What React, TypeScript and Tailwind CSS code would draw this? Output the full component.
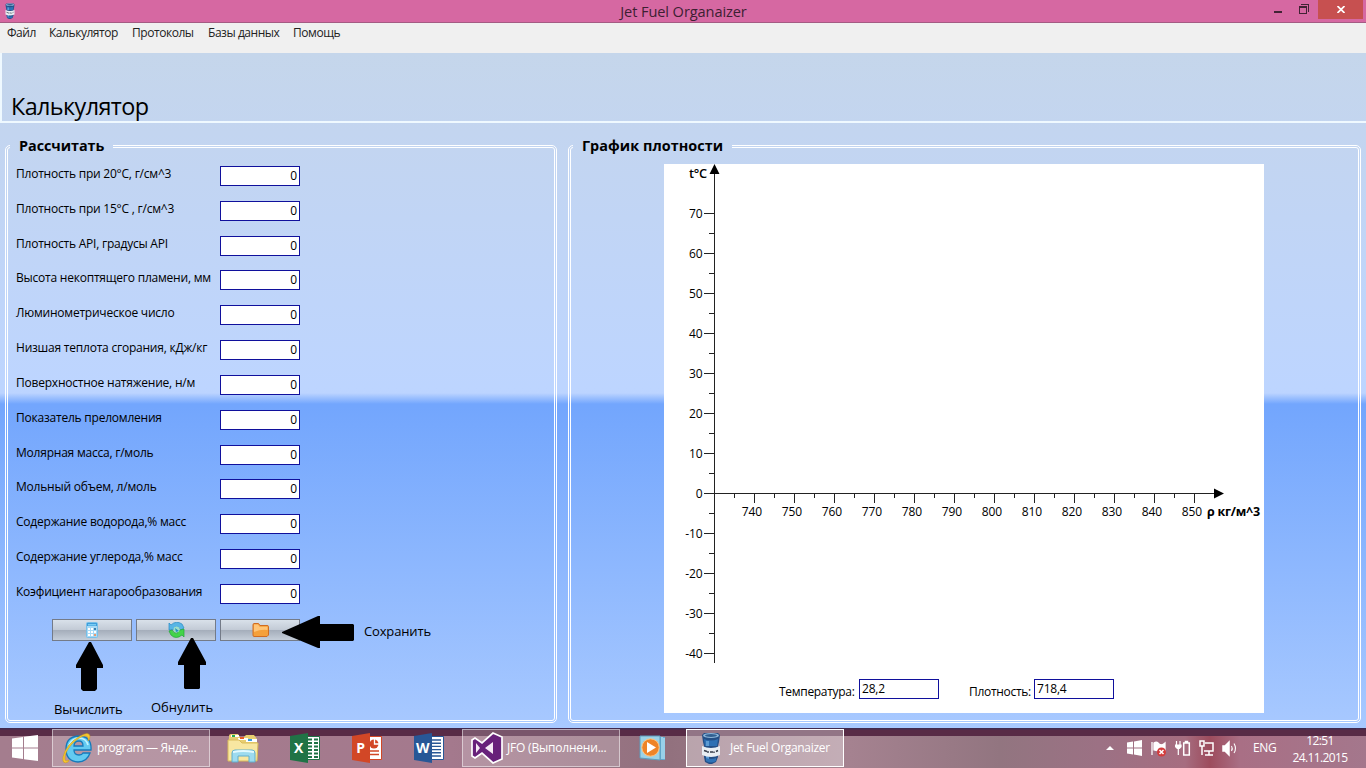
import React from "react";

const menu = [
  { t: "Файл", c: "w-[42px]" },
  { t: "Калькулятор", c: "w-[83px]" },
  { t: "Протоколы", c: "w-[76px]" },
  { t: "Базы данных", c: "w-[85px]" },
  { t: "Помощь", c: "w-[60px]" },
];

const fields = [
  "Плотность при 20°C, г/см^3",
  "Плотность при 15°C , г/см^3",
  "Плотность API, градусы API",
  "Высота некоптящего пламени, мм",
  "Люминометрическое число",
  "Низшая теплота сгорания, кДж/кг",
  "Поверхностное натяжение, н/м",
  "Показатель преломления",
  "Молярная масса, г/моль",
  "Мольный объем, л/моль",
  "Содержание водорода,% масс",
  "Содержание углерода,% масс",
  "Коэфициент нагарообразования",
];

function BarrelIcon({ className }: { className: string }) {
  return (
    <svg viewBox="0 0 20 32" className={className} preserveAspectRatio="none">
      <path d="M1 3L3 1H17L19 3L18 10L17 14V25L15 30L11 32H8L4 30L3 25V14L2 10Z" fill="#244f86" />
      <ellipse cx="10" cy="3.5" rx="8" ry="2.5" fill="#8db5d7" />
      <ellipse cx="10" cy="3.5" rx="6" ry="1.4" fill="#315f91" />
      <path d="M3 7Q10 10 17 7L16 14H4Z" fill="#2d70b4" />
      <path d="M5 9H8V14H5ZM5 24H8V29H5Z" fill="#5c9bd3" />
      <path d="M1 14Q10 18 19 14V23Q10 27 1 23Z" fill="#e9eef3" />
      <path d="M3 18.5L6 19.5M7 19V21M9 20H12M13 19.5V21M15 19.5L17 18.5" stroke="#343b48" strokeWidth="1.4" />
      <path d="M5 26Q10 28 15 26V29Q10 32 5 29Z" fill="#2e73b7" />
    </svg>
  );
}

function WindowsLogo({ className }: { className: string }) {
  return (
    <svg viewBox="0 0 26 26" className={className} fill="#fff">
      <path d="M0 3.5L11 2V12.4H0ZM12 1.8L26 0V12.4H12ZM0 13.4H11V24L0 22.5ZM12 13.4H26V26L12 24.2Z" />
    </svg>
  );
}

function CalculatorIcon() {
  return (
    <svg viewBox="0 0 12 16" className="h-4 w-3">
      <rect x=".5" y=".5" width="11" height="15" rx="1" fill="#a8d9f5" stroke="#77bfe8" />
      <path d="M1 1H11V4H1Z" fill="#3f9ddb" />
      <path d="M2 2H10V3.5H2Z" fill="#79cdf4" />
      <path d="M2 6H4V8H2ZM5 6H7V8H5ZM2 9H4V11H2ZM5 9H7V11H5ZM8 9H10V11H8ZM2 12H4V14H2ZM5 12H7V14H5Z" fill="#fff" />
      <path d="M8 6H10V8H8Z" fill="#397fae" />
      <path d="M8 12H10V14H8Z" fill="#e79a70" />
    </svg>
  );
}

function RefreshIcon() {
  return (
    <svg viewBox="0 0 17 16" className="h-4 w-[17px]">
      <path d="M1 1L3 3Q8-2 14 2L16 6L13 8Q11 4 7 5L8 7L1 8Z" fill="#58b5e5" stroke="#278bc5" strokeWidth=".7" />
      <path d="M16 15L14 13Q8 18 3 13L1 9L4 8Q6 12 10 11L8 9L16 7Z" fill="#43d449" stroke="#20a637" strokeWidth=".7" />
      <circle cx="8.5" cy="7.5" r="3" fill="#9ddfca" />
      <path d="M7 6L11 9L8 10Z" fill="#238fbe" />
    </svg>
  );
}

function FolderIcon() {
  return (
    <svg viewBox="0 0 17 14" className="h-[14px] w-[17px]">
      <path d="M1 2Q1 .5 2 .5H6.5L8 2.5H15Q16.5 2.5 16.5 3.5V12L15 13.5H2Q1 13.5 1 12Z" fill="#f5a03a" stroke="#d06c22" />
      <path d="M2 1.5H6L7.5 3.7H15.5V7Q9 6 2 9Z" fill="#ffc578" />
    </svg>
  );
}

function DensityChart() {
  const xs = Array.from({ length: 12 }, (_, i) => i);
  const ys = Array.from({ length: 12 }, (_, i) => 70 - i * 10);
  return (
    <svg width="600" height="505" viewBox="664 164 600 505" className="block font-['Open_Sans',sans-serif] text-[12px]">
      <g stroke="#222" strokeWidth="1" shapeRendering="crispEdges">
        <path d="M714.5 172V663M704 493.5H1216" />
        {ys.map((v) => <path key={v} d={`M704 ${493.5 - v * 4}H714`} />)}
        {ys.slice(0, 11).map((v) => <path key={v} d={`M709 ${513.5 - v * 4}H714`} />)}
        {xs.map((i) => <path key={i} d={`M${734.5 + i * 40} 494V498M${754.5 + i * 40} 494V503`} />)}
      </g>
      <path d="M714.5 164L719.5 174H709.5ZM1224 493.5L1214 498.5V488.5Z" fill="#000" />
      {ys.map((v) => <text key={v} x="702.5" y={497.8 - v * 4} textAnchor="end" letterSpacing="-.1">{v}</text>)}
      {xs.map((i) => <text key={i} x={752 + i * 40} y="516" textAnchor="middle" letterSpacing="-.1">{740 + i * 10}</text>)}
      <text x="689" y="178" fontWeight="600" textLength="18" lengthAdjust="spacingAndGlyphs">t°C</text>
      <text x="1207" y="516" fontWeight="700" textLength="53" lengthAdjust="spacingAndGlyphs">ρ кг/м^3</text>
    </svg>
  );
}

function OfficeIcon({ letter, color, kind }: { letter: string; color: string; kind: string }) {
  return (
    <svg viewBox="0 0 30 30" className="h-[30px] w-[30px]">
      <path d="M16 3.5H29.5V26.5H16Z" fill="#fff" stroke={color} strokeWidth="1" />
      {kind === "x" && <path d="M18 6.5H22M24 6.5H28M18 10H22M24 10H28M18 13.5H22M24 13.5H28M18 17H22M24 17H28M18 20.5H22M24 20.5H28M18 24H22M24 24H28" stroke={color} strokeWidth="2" />}
      {kind === "p" && <><circle cx="22" cy="11" r="4.5" fill={color} /><path d="M22.5 6V11H27" stroke="#fff" fill="none" strokeWidth="1.3" /><path d="M18 18H27M18 21.5H27" stroke={color} strokeWidth="1.5" /></>}
      {kind === "w" && <path d="M18 7H27M18 10.2H27M18 13.4H27M18 16.6H27M18 19.8H27M18 23H27" stroke={color} strokeWidth="1.4" />}
      <path d="M0 3L18 0V30L0 27Z" fill={color} />
      <text x="8.5" y="20" fontSize="14" fontWeight="700" textAnchor="middle" fill="#fff">{letter}</text>
    </svg>
  );
}

function IeIcon() {
  return (
    <svg viewBox="0 0 30 32" className="h-8 w-[30px] shrink-0">
      <path d="M29 18H12Q12 23 17 23Q20 23 21 21H28Q25 30 16 30Q4 29 4 17Q4 5 16 4Q30 4 29 18ZM12 14H21Q21 9 17 9Q12 9 12 14Z" fill="#63caf1" stroke="#167aba" strokeWidth="1.3" />
      <path d="M7 13Q10 6 17 6Q24 6 26 13" fill="none" stroke="#c0f2ff" strokeWidth="1.7" />
      <path d="M6 30Q0 33 1 25Q4 12 18 4Q27-1 28 4Q28 7 26 9Q27 4 23 4Q18 4 10 12Q2 21 3 27Q3 30 7 28Z" fill="#f8c72e" stroke="#c89b16" strokeWidth=".5" />
    </svg>
  );
}

function ExplorerIcon() {
  return (
    <svg viewBox="0 0 32 30" className="h-[30px] w-8">
      <path d="M2 3Q2 1 4 1H11L13 4H17L19 2H27L30 6V27H1Z" fill="#e8ce71" />
      <path d="M4 2H12V4H4ZM11 5H21V7H11ZM19 6H30V9H19Z" fill="#fff" />
      <path d="M5 2H8V4H5Z" fill="#28ae4e" /><path d="M13 4H17V6H13Z" fill="#e85b28" /><path d="M21 6H25V8H21Z" fill="#3a9ce2" />
      <path d="M1 7H12L15 10H31L30 28H1Z" fill="#f8e7a1" stroke="#d9bc5a" />
      <path d="M5 29V20Q5 17 8 17H25Q28 17 28 20V29H22V23H11V29Z" fill="#9ddbef" stroke="#60aecc" />
      <path d="M6 19Q16 17 27 19" stroke="#e3faff" fill="none" strokeWidth="2" />
    </svg>
  );
}

function MediaIcon() {
  return (
    <svg viewBox="0 0 28 26" className="h-[26px] w-7">
      <path d="M5 1L26 2V25L5 24Z" fill="#61add3" />
      <path d="M23 2V24M25 3V24" stroke="#d1f4ff" />
      <path d="M1 1H21V25L1 23Z" fill="#9bd2e7" stroke="#5f9dbd" />
      <circle cx="11.5" cy="12.5" r="8.7" fill="#ee8428" stroke="#ffc684" />
      <path d="M8 7L17 12.5L8 18Z" fill="#fff" />
    </svg>
  );
}

function StudioIcon() {
  return (
    <svg viewBox="0 0 32 32" className="h-8 w-8 shrink-0">
      <path d="M22 1L31 5V27L22 31L11 21L4 26L1 24V8L4 6L11 11Z" fill="#68217a" stroke="#fff" strokeWidth="1.7" />
      <path d="M5 11L9 16L5 21ZM22 10V22L14 16Z" fill="#f5eaf5" />
    </svg>
  );
}

function TrayIcons() {
  return (
    <svg width="132" height="20" viewBox="0 0 132 20" fill="none" stroke="#fff" strokeWidth="1.5">
      <path d="M0 12L4 8L8 12Z" fill="#fff" stroke="none" />
      <path d="M21 4.5L27 3.6V9.5H21ZM28 3.4L36 2V9.5H28ZM21 10.5H27V16.4L21 15.5ZM28 10.5H36V18L28 16.6Z" fill="#fff" stroke="none" />
      <path d="M46 4V17M48 5Q51 3 53 6Q56 8 59 5V13Q55 14 48 12Z" fill="#fff" strokeWidth="1.3" />
      <circle cx="55.5" cy="14" r="4.5" fill="#d43b3b" stroke="none" /><path d="M53.5 12L57.5 16M57.5 12L53.5 16" />
      <path d="M70.5 3V7M74 3V7M72.3 10V17" strokeWidth="1.2" /><path d="M69 6.5H75.6V9L73.6 11H71L69 9Z" fill="#fff" stroke="none" />
      <path d="M77.7 5H83.3V17H77.7ZM79.5 5V3.4H81.5V5" />
      <rect x="94" y="3" width="4" height="5" /><path d="M96 8V17M99 5H107V13H98M103 13V17M99 17H107" />
      <path d="M117 8H119L123 4V17L119 13H117Z" fill="#fff" /><path d="M125.5 8Q127 10.5 125.5 13M128 5.5Q131 10.5 128 15" strokeWidth="1.1" />
    </svg>
  );
}

function CommandButton({ children }: { children: React.ReactNode }) {
  return <button className="flex h-[22px] w-20 items-center justify-center border border-[#747b88] bg-[linear-gradient(to_bottom,#d9e1ea_0%,#c3cbd6_48%,#a5aebb_52%,#c5ced9_100%)]">{children}</button>;
}

export default function App() {
  return (
    <div className="flex h-[768px] w-[1366px] flex-col overflow-hidden bg-[#f0f0f0] font-['Open_Sans','Noto_Sans',sans-serif] text-[12px] leading-4 tracking-[-0.22px] text-black">
      <header className="flex h-[23px] shrink-0 border-b border-[#a45b83] bg-[#d668a2]">
        <div className="flex w-[52px] pt-[3px] pl-[5px]"><BarrelIcon className="h-4 w-[10px]" /></div>
        <h1 className="flex-1 pl-[46px] text-center text-[14.6px] leading-[23px] tracking-[-0.1px] text-[#3d2032]">Jet Fuel Organaizer</h1>
        <div className="flex w-[97px] shrink-0">
          <svg width="49" height="20" viewBox="0 0 49 20" fill="none" stroke="#422335" shapeRendering="crispEdges"><path d="M5 12H13" strokeWidth="2" /><path d="M31 6.5H37V13.5H30V6.5ZM32 4.5H39.5V12M30 7.5H37" /></svg>
          <div className="flex h-[19px] w-[45px] items-center justify-center bg-[#c75050]"><svg width="8" height="7" viewBox="0 0 8 7" stroke="#fff" strokeWidth="1.7"><path d="M.5 0L7.5 7M7.5 0L.5 7" /></svg></div>
        </div>
      </header>
      <nav className="flex h-[30px] shrink-0 items-start bg-[#f0f0f0] pt-[2px] pl-[7px] tracking-[-0.45px] text-[#222]">
        {menu.map((m) => <span key={m.t} className={`${m.c} whitespace-nowrap`}>{m.t}</span>)}
      </nav>
      <main className="flex h-[675px] shrink-0 flex-col bg-[linear-gradient(to_bottom,#c5d6eb_0px,#c3d5f0_80px,#bdd5ff_335px,#bcd4ff_340px,#73a6fd_351px,#73a6fd_354px,#a8c9ff_675px)]">
        <div className="flex h-[70px] items-end border-b-2 border-l-2 border-[#eff9ff] pl-[9px]">
          <h2 className="text-[23.4px] leading-[30px] tracking-[-0.6px]">Калькулятор</h2>
        </div>
        <div className="flex h-[600px] gap-[11px] pt-[13px] pl-[5px]">
          <fieldset className="relative h-[587px] w-[552px] rounded-[5px] border-[3px] border-double border-white pl-2">
            <legend className="ml-[-6px] h-5 px-[9px] text-[14.4px] leading-5 font-bold tracking-[-0.05px]">Рассчитать</legend>
            <div className="flex h-[463px] flex-col pt-[10px]">
              {fields.map((f) => (
                <label key={f} className="flex h-[34.83px] shrink-0 items-start">
                  <span className="w-[204px] whitespace-nowrap">{f}</span>
                  <input readOnly value="0" className="h-5 w-20 border border-[#10109c] bg-white px-[2px] pb-px text-right outline-none" />
                </label>
              ))}
            </div>
            <div className="flex gap-1 pl-9">
              <CommandButton><CalculatorIcon /></CommandButton>
              <CommandButton><RefreshIcon /></CommandButton>
              <CommandButton><FolderIcon /></CommandButton>
            </div>
            <svg className="pointer-events-none absolute top-[459px] left-[67px]" width="283" height="80" viewBox="75 615 283 80">
              <path d="M89 642H91L103 665V668H97V689L95 691H83L81 689V668H76V665ZM191 638H193L206 662V665H200V688L199 689H185L184 688V665H178V662ZM282 632L318 616H320V624H353L354 625V640L353 641H320V648H318L282 633Z" />
            </svg>
            <span className="absolute top-[467px] left-[356px] text-[13px] tracking-[-0.15px]">Сохранить</span>
            <span className="absolute top-[545px] left-[46px] text-[13px] tracking-[-0.2px]">Вычислить</span>
            <span className="absolute top-[543px] left-[143px] text-[13px] tracking-[0px]">Обнулить</span>
          </fieldset>
          <fieldset className="h-[587px] w-[793px] rounded-[5px] border-[3px] border-double border-white">
            <legend className="ml-[2px] h-5 px-[9px] text-[14.4px] leading-5 font-bold tracking-[0.05px]">График плотности</legend>
            <div className="mt-[8px] ml-[93px] h-[549px] w-[600px] bg-white">
              <DensityChart />
              <div className="flex pt-[10px] pl-[115px]">
                <label className="flex w-[175px]"><span className="w-[80px] shrink-0 pt-[5px] tracking-[-0.3px]">Температура:</span><input readOnly value="28,2" className="h-5 w-20 shrink-0 border border-[#10109c] px-[2px] pb-[2px] outline-none" /></label>
                <label className="ml-[15px] flex"><span className="w-[65px] shrink-0 pt-[5px] tracking-[-0.3px]">Плотность:</span><input readOnly value="718,4" className="h-5 w-20 shrink-0 border border-[#10109c] px-[2px] pb-[2px] outline-none" /></label>
              </div>
            </div>
          </fieldset>
        </div>
      </main>
      <footer className="flex h-10 shrink-0 items-center bg-[linear-gradient(to_bottom,#40294e_0px,#40294e_1px,#582b46_2px,#582b46_8px,transparent_8px),linear-gradient(to_right,#a47d8e_0px,#a4798d_450px,#92717e_670px,#a58290_850px,#927580_1000px,#9c7184_1100px,#a66d80_1185px,#9d4c5d_1210px,#a96f85_1240px,#a4778c_1366px)] tracking-[-0.35px] text-white">
        <div className="flex w-[52px] justify-center pr-[2px]"><WindowsLogo className="h-[26px] w-[26px]" /></div>
        <div className="flex h-[38px] w-[158px] items-center gap-[5px] border border-white/50 bg-white/20 pl-[9px]"><IeIcon /><span>program — Янде...</span></div>
        <div className="ml-[17px] flex w-[235px] items-center"><div className="w-[63px]"><ExplorerIcon /></div><div className="w-[62px]"><OfficeIcon letter="X" color="#207346" kind="x" /></div><div className="w-[62px]"><OfficeIcon letter="P" color="#d24726" kind="p" /></div><OfficeIcon letter="W" color="#285796" kind="w" /></div>
        <div className="flex h-[38px] w-[158px] items-center gap-1 border border-white/50 bg-white/20 pl-2"><StudioIcon /><span className="tracking-[-0.2px]">JFO (Выполнени...</span></div>
        <div className="flex w-[66px] justify-center pr-[1px]"><MediaIcon /></div>
        <div className="flex h-[38px] w-[158px] items-center gap-[9px] border border-white bg-white/35 pl-[14px]"><BarrelIcon className="h-8 w-5 shrink-0" /><span className="tracking-[-0.3px]">Jet Fuel Organaizer</span></div>
        <div className="ml-auto flex items-center"><TrayIcons /><span className="ml-[15px] w-[34px]">ENG</span><div className="w-[79px] pr-[13px] pt-[2px] text-center leading-[17px] tracking-[-0.6px]"><div>12:51</div><div>24.11.2015</div></div></div>
      </footer>
    </div>
  );
}
